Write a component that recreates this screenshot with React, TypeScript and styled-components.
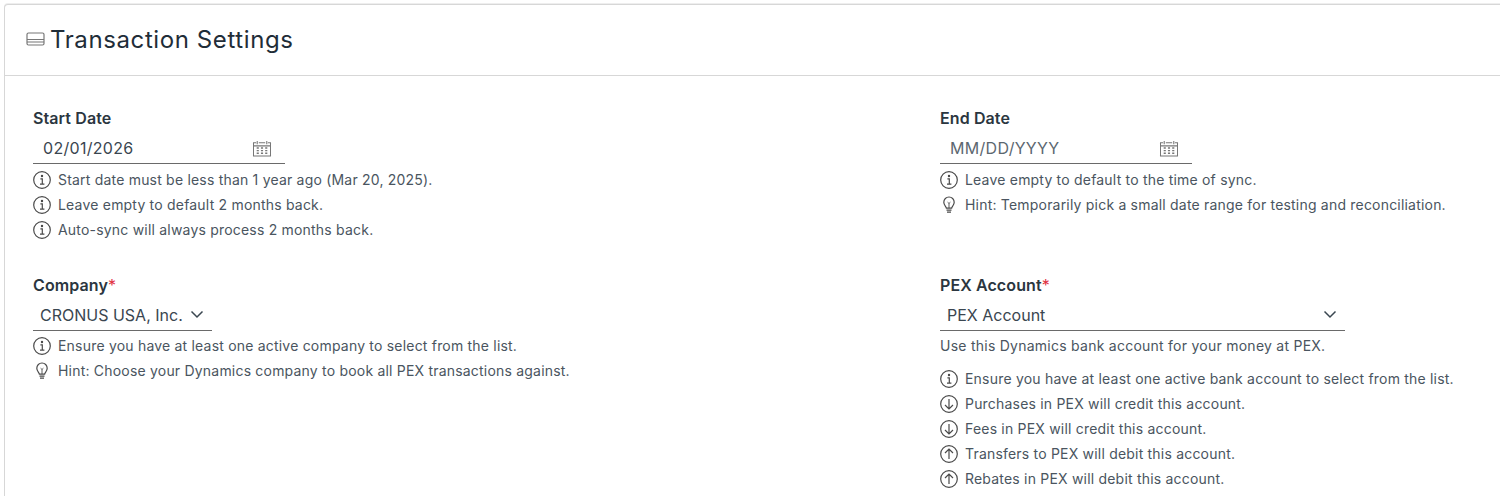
import React from 'react'
import styled, { createGlobalStyle } from 'styled-components'

const GlobalStyle = createGlobalStyle`
    html, body {
        margin: 0;
        padding: 0;
        background: #fff;
        overflow: hidden;
    }

    body {
        font-family: Inter, "Liberation Sans", sans-serif;
    }
`

type HintKind = 'info' | 'bulb' | 'down' | 'up'

const HintIcon: React.FunctionComponent<{ kind: HintKind }> = ({ kind }) => {
    if (kind === 'bulb') {
        return (
            <IconSvg viewBox="0 0 18 18">
                <path d="M6.400 12.200c0-1.600-2.600-2.600-2.600-6A5.200 5.200 0 0 1 9 1a5.200 5.200 0 0 1 5.200 5.200c0 3.400-2.600 4.400-2.600 6z" />
                <path d="M6.500 14.200h5M7 16.200h4" />
                <path d="M9 12V7.500M7.600 6.200 9 7.500l1.400-1.300" strokeWidth="0.9" />
            </IconSvg>
        )
    }

    return (
        <IconSvg viewBox="0 0 18 18">
            <circle cx="9" cy="9" r="8.300" />
            {kind === 'info' && (
                <>
                    <path d="M7.400 7.800h1.900v5.400M7 13.200h4.400" />
                    <circle cx="9" cy="5" r="0.600" />
                </>
            )}
            {kind === 'down' && <path d="M9 4v10M5 10l4 4 4-4" />}
            {kind === 'up' && <path d="M9 14V4M5 8l4-4 4 4" />}
        </IconSvg>
    )
}

const CalendarIcon = () => (
    <CalendarSvg viewBox="0 0 18 16">
        <path d="M3.500 2.500H1v12.500h16V2.500h-2.500M6 2.500h6" />
        <path d="M4.500 1v3M13.500 1v3" />
        <path d="M1 5.500h16" />
        <path
            d="M4 7.500h2M8 7.500h2M12 7.500h2M4 10h2M8 10h2M12 10h2M4 12.500h2M8 12.500h2M12 12.500h2"
            strokeWidth="1.300"
        />
    </CalendarSvg>
)

const Chevron = () => (
    <ChevronSvg viewBox="0 0 14 9">
        <path d="M1.500 1.500 7 7l5.500-5.500" />
    </ChevronSvg>
)

const Hint: React.FunctionComponent<{ kind: HintKind; children: React.ReactNode }> = ({
    kind,
    children
}) => (
    <HintRow>
        <HintIcon kind={kind} />
        <span>{children}</span>
    </HintRow>
)

export default function App() {
    return (
        <>
            <GlobalStyle />
            <Card>
                <CardHeader>
                    <svg width="19" height="14" viewBox="0 0 19 14" fill="none" stroke="#777" strokeWidth="1.200">
                        <rect x="1" y="1" width="17" height="12" rx="1.500" />
                        <path d="M1 7.500h17M1 10h17" />
                    </svg>
                    <CardTitle>Transaction Settings</CardTitle>
                </CardHeader>
                <CardBody>
                    <Field>
                        <Label>Start Date</Label>
                        <DateInput>
                            <InputText>02/01/2026</InputText>
                            <CalendarIcon />
                        </DateInput>
                        <Hints>
                            <Hint kind="info">Start date must be less than 1 year ago (Mar 20, 2025).</Hint>
                            <Hint kind="info">Leave empty to default 2 months back.</Hint>
                            <Hint kind="info">Auto-sync will always process 2 months back.</Hint>
                        </Hints>
                    </Field>
                    <Field>
                        <Label>End Date</Label>
                        <DateInput>
                            <InputText $placeholder>MM/DD/YYYY</InputText>
                            <CalendarIcon />
                        </DateInput>
                        <Hints>
                            <Hint kind="info">Leave empty to default to the time of sync.</Hint>
                            <Hint kind="bulb">Hint: Temporarily pick a small date range for testing and reconciliation.</Hint>
                        </Hints>
                    </Field>
                    <Field>
                        <Label>
                            Company<Required>*</Required>
                        </Label>
                        <Select $width={179}>
                            <SelectText>CRONUS USA, Inc.</SelectText>
                            <Chevron />
                        </Select>
                        <Hints>
                            <Hint kind="info">Ensure you have at least one active company to select from the list.</Hint>
                            <Hint kind="bulb">Hint: Choose your Dynamics company to book all PEX transactions against.</Hint>
                        </Hints>
                    </Field>
                    <Field>
                        <Label>
                            PEX Account<Required>*</Required>
                        </Label>
                        <Select $width={405}>
                            <SelectText>PEX Account</SelectText>
                            <Chevron />
                        </Select>
                        <Description>Use this Dynamics bank account for your money at PEX.</Description>
                        <Hints>
                            <Hint kind="info">Ensure you have at least one active bank account to select from the list.</Hint>
                            <Hint kind="down">Purchases in PEX will credit this account.</Hint>
                            <Hint kind="down">Fees in PEX will credit this account.</Hint>
                            <Hint kind="up">Transfers to PEX will debit this account.</Hint>
                            <Hint kind="up">Rebates in PEX will debit this account.</Hint>
                        </Hints>
                    </Field>
                </CardBody>
            </Card>
        </>
    )
}

const Card = styled.div`
    box-sizing: border-box;
    width: 1520px;
    height: 492px;
    margin: 4px 0 0 4px;
    overflow: hidden;
    background: #fff;
    border: 1px solid #d7d7d7;
    border-bottom: none;
    border-radius: 4px 4px 0 0;
    box-shadow: 0 -1px 0 #eee;
`

const CardHeader = styled.div`
    box-sizing: border-box;
    height: 71px;
    display: flex;
    align-items: center;
    gap: 5px;
    padding: 0 0 2px 21px;
    border-bottom: 1px solid #d7d7d7;
`

const CardTitle = styled.h2`
    margin: 0;
    font-size: 24px;
    font-weight: 400;
    letter-spacing: 0.6px;
    color: #1f2d38;
`

const CardBody = styled.div`
    display: grid;
    grid-template-columns: 907px 1fr;
    grid-template-rows: 167px auto;
    padding: 33px 0 0 28px;
`

const Field = styled.div`
    display: flex;
    flex-direction: column;
    align-items: flex-start;
`

const Label = styled.label`
    height: 18px;
    line-height: 18px;
    font-size: 16px;
    font-weight: 600;
    letter-spacing: 0.1px;
    color: #2b3640;
`

const Required = styled.span`
    color: #e02f3e;
    font-weight: 400;
`

const DateInput = styled.div`
    box-sizing: border-box;
    width: 252px;
    height: 33px;
    margin-top: 4px;
    display: flex;
    align-items: center;
    justify-content: space-between;
    padding: 2px 13px 0 10px;
    border-bottom: 1px solid #6a6a6a;
`

const InputText = styled.span<{ $placeholder?: boolean }>`
    font-size: 16px;
    letter-spacing: 0.3px;
    color: ${({ $placeholder }) => ($placeholder ? '#5c6770' : '#3a4650')};
`

const CalendarSvg = styled.svg`
    width: 20px;
    height: 17px;
    fill: none;
    stroke: #777;
    stroke-width: 1;
`

const Select = styled.div<{ $width: number }>`
    box-sizing: border-box;
    width: ${({ $width }) => $width}px;
    height: 33px;
    margin-top: 4px;
    display: flex;
    align-items: center;
    justify-content: space-between;
    padding: 1px 8px 0 7px;
    border-bottom: 1px solid #6a6a6a;
`

const SelectText = styled.span`
    font-size: 16px;
    color: #3a4650;
`

const ChevronSvg = styled.svg`
    width: 14px;
    height: 9px;
    fill: none;
    stroke: #3a4650;
    stroke-width: 1.500;
`

const Description = styled.div`
    height: 25px;
    line-height: 25px;
    margin-top: 2px;
    font-size: 14px;
    letter-spacing: 0.25px;
    color: #4a5560;
`

const Hints = styled.div`
    display: flex;
    flex-direction: column;
    margin-top: 2px;

    ${DateInput} + & {
        margin-top: 3px;
    }

    ${Description} + & {
        margin-top: 8px;
    }
`

const HintRow = styled.div`
    height: 25px;
    display: flex;
    align-items: center;
    gap: 7px;
    font-size: 14px;
    letter-spacing: 0.2px;
    color: #4a5560;
    white-space: nowrap;
`

const IconSvg = styled.svg`
    width: 18px;
    height: 18px;
    flex: none;
    fill: none;
    stroke: #4a4a4a;
    stroke-width: 1.200;
`
